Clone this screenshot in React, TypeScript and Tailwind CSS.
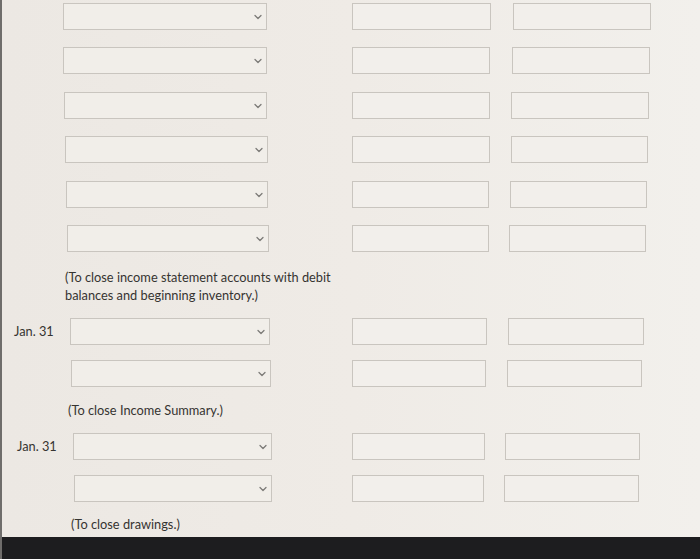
import React from "react";

function Chevron() {
  return (
    <svg width="8" height="6" viewBox="0 0 8 6" className="shrink-0">
      <path d="M1 1.5 L4 4.5 L7 1.5" fill="none" stroke="#7d7b78" strokeWidth="1.3" strokeLinecap="round" strokeLinejoin="round" />
    </svg>
  );
}

function Sel({ className }: { className: string }) {
  return (
    <div className={"h-[27px] border border-[#c9c5bf] bg-[#f1eee9] flex items-center justify-end pr-[4px] " + className}>
      <Chevron />
    </div>
  );
}

function Box({ className }: { className: string }) {
  return <div className={"h-[27px] border border-[#c9c5bf] bg-[#f2efeb] " + className} />;
}

export default function App() {
  return (
    <div
      className="w-[700px] h-[559px] flex flex-col bg-gradient-to-r from-[#ece8e3] via-[#efebe6] to-[#f2f0ec] border-l-[2px] border-[#6f6d6b] text-[#363431] overflow-hidden"
      style={{ fontFamily: "Lato, 'Open Sans', sans-serif" }}
    >
      <div className="flex-1 flex flex-col">
        <div className="flex mt-[3px]">
          <Sel className="ml-[61px] w-[204px]" />
          <Box className="ml-[85px] w-[139px]" />
          <Box className="ml-[22px] w-[138px]" />
        </div>
        <div className="flex mt-[17px]">
          <Sel className="ml-[61px] w-[204px]" />
          <Box className="ml-[85px] w-[138px]" />
          <Box className="ml-[22px] w-[138px]" />
        </div>
        <div className="flex mt-[18px]">
          <Sel className="ml-[62px] w-[203px]" />
          <Box className="ml-[85px] w-[138px]" />
          <Box className="ml-[21px] w-[138px]" />
        </div>
        <div className="flex mt-[17px]">
          <Sel className="ml-[63px] w-[203px]" />
          <Box className="ml-[84px] w-[138px]" />
          <Box className="ml-[21px] w-[137px]" />
        </div>
        <div className="flex mt-[18px]">
          <Sel className="ml-[64px] w-[202px]" />
          <Box className="ml-[84px] w-[137px]" />
          <Box className="ml-[21px] w-[137px]" />
        </div>
        <div className="flex mt-[17px]">
          <Sel className="ml-[65px] w-[202px]" />
          <Box className="ml-[83px] w-[137px]" />
          <Box className="ml-[20px] w-[137px]" />
        </div>

        <div className="ml-[63px] mt-[16px] text-[12.8px] leading-[18px]">
          <div>(To close income statement accounts with debit</div>
          <div>balances and beginning inventory.)</div>
        </div>

        <div className="flex items-center mt-[14px] pl-[12px]">
          <span className="w-[56px] text-[12.8px]">Jan. 31</span>
          <Sel className="w-[200px]" />
          <Box className="ml-[82px] w-[135px]" />
          <Box className="ml-[21px] w-[136px]" />
        </div>
        <div className="flex mt-[15px]">
          <Sel className="ml-[69px] w-[200px]" />
          <Box className="ml-[81px] w-[134px]" />
          <Box className="ml-[21px] w-[135px]" />
        </div>

        <div className="ml-[66px] mt-[14px] text-[12.8px] leading-[18px]">(To close Income Summary.)</div>

        <div className="flex items-center mt-[14px] pl-[15px]">
          <span className="w-[56px] text-[12.8px]">Jan. 31</span>
          <Sel className="w-[199px]" />
          <Box className="ml-[80px] w-[133px]" />
          <Box className="ml-[20px] w-[135px]" />
        </div>
        <div className="flex mt-[15px]">
          <Sel className="ml-[72px] w-[198px]" />
          <Box className="ml-[80px] w-[132px]" />
          <Box className="ml-[20px] w-[135px]" />
        </div>

        <div className="ml-[69px] mt-[13px] text-[12.8px] leading-[18px]">(To close drawings.)</div>
      </div>
      <div className="h-[22px] bg-[#1d1d1f] -ml-[2px]" />
    </div>
  );
}
